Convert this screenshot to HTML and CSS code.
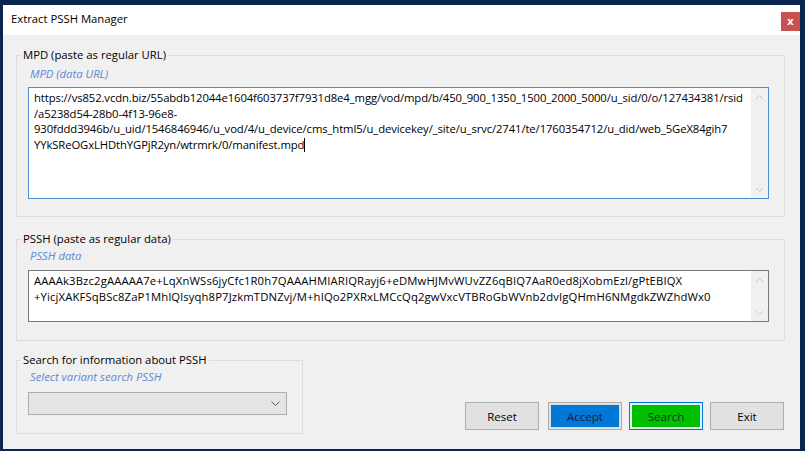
FILE: index.html
```html
<!DOCTYPE html>
<html lang="en">
<head>
    <meta charset="UTF-8">
    <meta name="viewport" content="width=device-width, initial-scale=1.0">
    <title>Extract PSSH Manager</title>
    <link rel="stylesheet" href="styles.css">
</head>
<body>

<div class="window">
    <div class="titlebar">
        <span class="title">Extract PSSH Manager</span>
        <span class="close-btn">x</span>
    </div>

    <div class="content">
        <fieldset class="group group-mpd">
            <legend>MPD (paste as regular URL)</legend>
            <div class="hint">MPD (data URL)</div>
            <div class="text-box focused mpd-box">
                <div class="text-lines">
                    <div>https://vs852.vcdn.biz/55abdb12044e1604f603737f7931d8e4_mgg/vod/mpd/b/450_900_1350_1500_2000_5000/u_sid/0/o/127434381/rsid</div>
                    <div>/a5238d54-28b0-4f13-96e8-</div>
                    <div>930fddd3946b/u_uid/1546846946/u_vod/4/u_device/cms_html5/u_devicekey/_site/u_srvc/2741/te/1760354712/u_did/web_5GeX84gih7</div>
                    <div>YYkSReOGxLHDthYGPjR2yn/wtrmrk/0/manifest.mpd<span class="caret"></span></div>
                </div>
                <div class="scrollbar">
                    <svg width="9" height="6" viewBox="0 0 9 6"><path d="M1 5 L4.5 1.5 L8 5" fill="none" stroke="#c4c4c4" stroke-width="1"/></svg>
                    <svg width="9" height="6" viewBox="0 0 9 6"><path d="M1 1 L4.5 4.5 L8 1" fill="none" stroke="#c4c4c4" stroke-width="1"/></svg>
                </div>
            </div>
        </fieldset>

        <fieldset class="group group-pssh">
            <legend>PSSH (paste as regular data)</legend>
            <div class="hint">PSSH data</div>
            <div class="text-box pssh-box">
                <div class="text-lines">
                    <div>AAAAk3Bzc2gAAAAA7e+LqXnWSs6jyCfc1R0h7QAAAHMIARIQRayj6+eDMwHJMvWUvZZ6qBIQ7AaR0ed8jXobmEzl/gPtEBIQX</div>
                    <div>+YicjXAKFSqBSc8ZaP1MhlQlsyqh8P7JzkmTDNZvj/M+hIQo2PXRxLMCcQq2gwVxcVTBRoGbWVnb2dvIgQHmH6NMgdkZWZhdWx0</div>
                </div>
                <div class="scrollbar">
                    <svg width="9" height="6" viewBox="0 0 9 6"><path d="M1 5 L4.5 1.5 L8 5" fill="none" stroke="#c4c4c4" stroke-width="1"/></svg>
                    <svg width="9" height="6" viewBox="0 0 9 6"><path d="M1 1 L4.5 4.5 L8 1" fill="none" stroke="#c4c4c4" stroke-width="1"/></svg>
                </div>
            </div>
        </fieldset>

        <div class="bottom-row">
            <fieldset class="group group-search">
                <legend>Search for information about PSSH</legend>
                <div class="hint">Select variant search PSSH</div>
                <div class="combo">
                    <svg width="9" height="5" viewBox="0 0 9 5"><path d="M0.5 0.5 L4.5 4.5 L8.5 0.5" fill="none" stroke="#555" stroke-width="1"/></svg>
                </div>
            </fieldset>

            <div class="buttons">
                <button class="btn btn-reset">Reset</button>
                <button class="btn btn-accept"><span>Accept</span></button>
                <button class="btn btn-search"><span>Search</span></button>
                <button class="btn">Exit</button>
            </div>
        </div>
    </div>
</div>

</body>
</html>
```

FILE: styles.css
```css
* {
    box-sizing: border-box;
}
body {
    margin: 0;
    background-color: #0b2550;
    font-family: "Open Sans", "Noto Sans", sans-serif;
    font-size: 11.3px;
    color: #000;
}
.window {
    width: 797px;
    height: 444px;
    margin: 5px 0 0 3px;
    background-color: #f0f0f0;
    display: flex;
    flex-direction: column;
}
.titlebar {
    height: 30px;
    background-color: #fff;
    display: flex;
    align-items: flex-start;
    justify-content: space-between;
    padding-left: 8px;
}
.title {
    margin-top: 6px;
}
.close-btn {
    width: 19px;
    height: 19px;
    margin-top: 7px;
    background-color: #c75050;
    color: #fff;
    font-weight: bold;
    font-size: 11px;
    line-height: 17px;
    text-align: center;
}
.content {
    flex: 1;
    padding: 0 15px 0 13px;
}
.group {
    margin: 0;
    border: 1px solid #dcdcdc;
    padding: 0 15px 0 11px;
}
.group legend {
    margin-left: -7px;
    padding: 0 2px;
    line-height: 16px;
}
.hint {
    color: #5b8ad6;
    font-style: italic;
    line-height: 16px;
    padding-left: 2px;
}
.group-mpd {
    margin-top: 12px;
    padding-bottom: 17px;
}
.group-mpd .hint {
    margin-top: 3px;
    margin-bottom: 5px;
}
.group-pssh {
    margin-top: 14px;
    padding-bottom: 18px;
}
.group-pssh .hint {
    margin-top: 1px;
    margin-bottom: 6px;
}
.text-box {
    display: flex;
    background-color: #fff;
    border: 1px solid #7a7a7a;
}
.text-box.focused {
    border-color: #4a90d0;
}
.mpd-box {
    height: 112px;
}
.pssh-box {
    height: 52px;
}
.text-lines {
    flex: 1;
    min-width: 0;
    padding: 2px 0 0 5px;
    line-height: 15.5px;
    white-space: nowrap;
    overflow: hidden;
}
.mpd-box .text-lines {
    letter-spacing: -0.11px;
}
.pssh-box .text-lines {
    padding-top: 2px;
    line-height: 16px;
    letter-spacing: 0.12px;
}
.caret {
    display: inline-block;
    width: 1px;
    height: 14px;
    background-color: #000;
    vertical-align: -3px;
}
.scrollbar {
    flex: none;
    width: 17px;
    background-color: #f0f0f0;
    display: flex;
    flex-direction: column;
    justify-content: space-between;
    align-items: center;
    padding: 6px 0 5px;
}
.bottom-row {
    display: flex;
    align-items: flex-end;
    justify-content: space-between;
    margin-top: 11px;
}
.group-search {
    width: 286px;
    padding-bottom: 18px;
}
.group-search .hint {
    margin-top: 1px;
    margin-bottom: 7px;
}
.combo {
    width: 259px;
    height: 23px;
    background-color: #e5e5e5;
    border: 1px solid #adadad;
    display: flex;
    align-items: center;
    justify-content: flex-end;
    padding-right: 6px;
}
.buttons {
    display: flex;
    gap: 7px;
    margin-bottom: 4px;
    margin-right: 1px;
}
.btn {
    width: 74px;
    height: 28px;
    padding: 0;
    font-family: "Open Sans", "Noto Sans", sans-serif;
    font-size: 11.5px;
    color: #000;
    background-color: #e1e1e1;
    border: 1px solid #adadad;
}
.btn-reset {
    margin-right: 2px;
}
.btn span {
    display: flex;
    align-items: center;
    justify-content: center;
    width: 100%;
    height: 100%;
}
.btn-accept {
    padding: 2px;
    background-color: #e1e1e1;
}
.btn-accept span {
    background-color: #0078d7;
    color: #1b1b3a;
}
.btn-search {
    padding: 2px;
    border-color: #0078d7;
    background-color: #e5f1fb;
}
.btn-search span {
    background-color: #00c000;
    color: #0e3a14;
}
```
